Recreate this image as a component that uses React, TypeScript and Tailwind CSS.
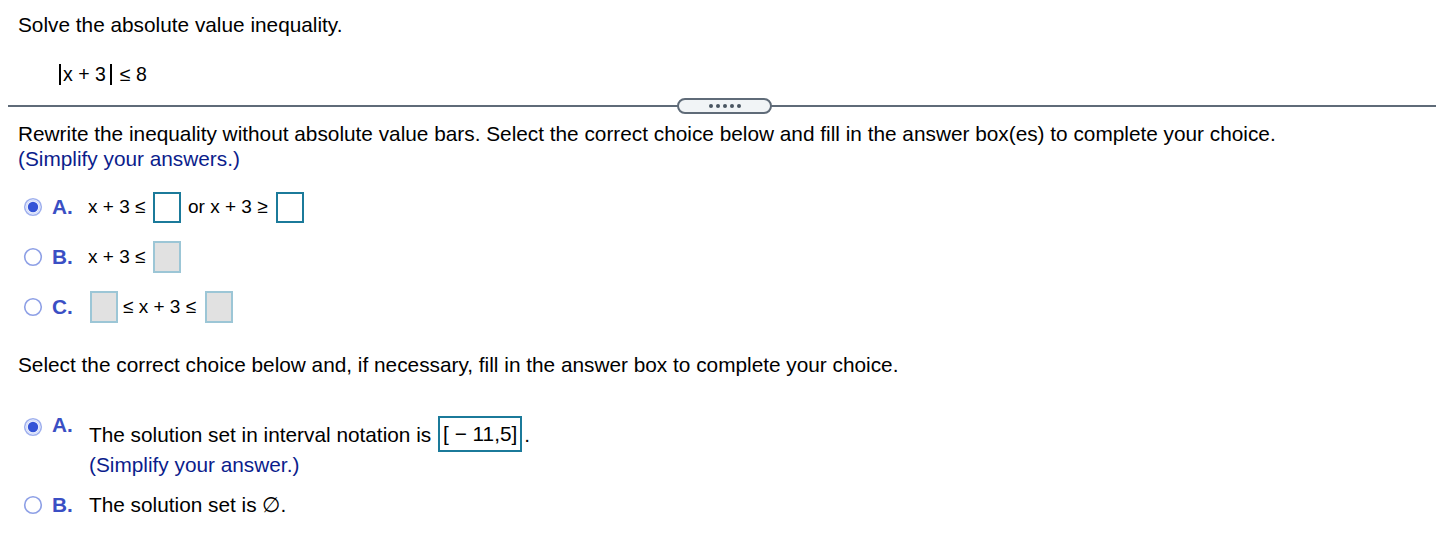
import React from "react";

function Radio({ checked }: { checked?: boolean }) {
  return (
    <svg width="20" height="20" viewBox="0 0 20 20" className="shrink-0">
      <circle cx="10" cy="10" r="8.3" fill="white" stroke={checked ? "#9fb0ee" : "#8ea0e6"} strokeWidth="1.6" />
      {checked && <circle cx="10" cy="10" r="6.6" fill="none" stroke="#d6defa" strokeWidth="1.5" />}
      {checked && <circle cx="10" cy="10" r="5.2" fill="#3453d6" />}
    </svg>
  );
}

function ActiveBox() {
  return <span className="inline-block shrink-0 w-[28px] h-[31px] border-2 border-[#1b7a9a] bg-white" />;
}

function GrayBox() {
  return <span className="inline-block shrink-0 w-[28px] h-[32px] border-2 border-[#9cc6d6] bg-[#e1e1e1]" />;
}

function Label({ children, w = "w-[36px]" }: { children: React.ReactNode; w?: string }) {
  return <span className={`inline-block shrink-0 ml-[9px] ${w} font-bold text-[#3a4fc4]`}>{children}</span>;
}

export default function App() {
  return (
    <div className="w-[1436px] h-[558px] bg-white text-black text-[20.8px] leading-[24px] font-['Liberation_Sans',Arial,sans-serif]">
      <div className="pl-[18px] pt-[13px]">Solve the absolute value inequality.</div>

      <div className="pl-[59px] pt-[25px] h-[49px] text-[19.5px] flex items-end">
        <div className="flex items-center h-[24px]">
          <span className="inline-block w-[2px] h-[21px] bg-black mr-[2px]" />
          <span className="whitespace-pre">x + 3</span>
          <span className="inline-block w-[2px] h-[21px] bg-black ml-[4px] mr-[8px]" />
          <span className="whitespace-pre">≤ 8</span>
        </div>
      </div>

      {/* divider with pill */}
      <div className="relative mt-[12px] ml-[8px] h-[16px] flex items-center">
        <div className="w-full h-[2px] bg-[#5f6b78]" />
        <div className="absolute left-[669px] top-0 w-[95px] h-[16px] rounded-full border-2 border-[#5f6b78] bg-[#f1f4f6] flex items-center justify-center gap-[3px]">
          {[0, 1, 2, 3, 4].map((i) => (
            <span key={i} className="w-[4px] h-[4px] rounded-full bg-[#4a5561]" />
          ))}
        </div>
      </div>

      <div className="pl-[18px] pt-[8px]">
        Rewrite the inequality without absolute value bars. Select the correct choice below and fill in the answer box(es) to complete your choice.
      </div>
      <div className="pl-[18px] pt-[1px] text-[#0b1d8c]">(Simplify your answers.)</div>

      <div className="pl-[23px] pt-[20px] flex flex-col gap-[18px]">
        <div className="flex items-center h-[32px]">
          <Radio checked />
          <Label>A.</Label>
          <span className="text-[19px] w-[65px] whitespace-pre">x + 3 ≤</span>
          <ActiveBox />
          <span className="text-[19px] ml-[7px] w-[88px] whitespace-pre">or x + 3 ≥</span>
          <ActiveBox />
        </div>
        <div className="flex items-center h-[32px]">
          <Radio />
          <Label>B.</Label>
          <span className="text-[19px] w-[65px] whitespace-pre">x + 3 ≤</span>
          <GrayBox />
        </div>
        <div className="flex items-center h-[32px]">
          <Radio />
          <Label w="w-[38px]">C.</Label>
          <GrayBox />
          <span className="text-[19px] ml-[5px] w-[82px] whitespace-pre">≤ x + 3 ≤</span>
          <GrayBox />
        </div>
      </div>

      <div className="pl-[18px] pt-[30px]">
        Select the correct choice below and, if necessary, fill in the answer box to complete your choice.
      </div>

      <div className="pl-[23px] pt-[39px]">
        <div className="flex items-start">
          <span className="mt-[1px]"><Radio checked /></span>
          <span className="ml-[9px] mt-[-3px] w-[37px] shrink-0 font-bold text-[#3a4fc4]">A.</span>
          <div className="flex flex-col">
            <div className="flex items-center h-[36px]">
              <span className="mt-[2px]">The solution set in interval notation is</span>
              <span className="ml-[7px] h-[36px] w-[84px] border-2 border-[#1b7a9a] flex items-center justify-center whitespace-pre">[ − 11,5]</span>
              <span className="ml-[2px] mt-[2px]">.</span>
            </div>
            <div className="pt-[1px] text-[#0b1d8c]">(Simplify your answer.)</div>
          </div>
        </div>
        <div className="flex items-center mt-[16px] h-[24px]">
          <Radio />
          <Label w="w-[37px]">B.</Label>
          <span>The solution set is ∅.</span>
        </div>
      </div>
    </div>
  );
}
